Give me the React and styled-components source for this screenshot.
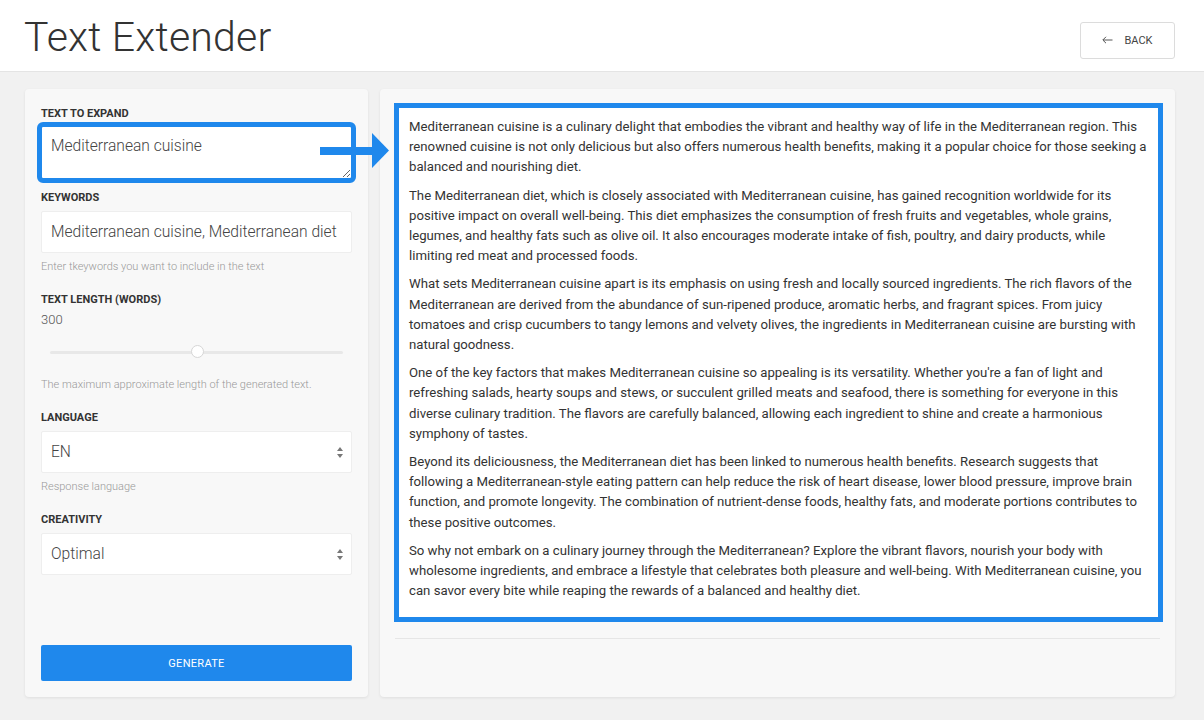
import React from 'react';
import styled, { createGlobalStyle } from 'styled-components';

const BLUE = '#1f88ec';

const GlobalStyle = createGlobalStyle`
  html, body {
    margin: 0;
    padding: 0;
    background: #f1f1f1;
    font-family: Roboto, "Liberation Sans", Arial, sans-serif;
    color: #333;
  }
  * { box-sizing: border-box; }
`;

const Page = styled.div`
  position: relative;
  min-height: 720px;
`;

const Header = styled.header`
  height: 72px;
  background: #fff;
  border-bottom: 1px solid #e4e4e4;
  display: flex;
  align-items: center;
  justify-content: space-between;
  padding: 0 29px 0 24px;
`;

const Title = styled.h1`
  margin: 0;
  font-size: 41px;
  font-weight: 300;
  color: #333;
  letter-spacing: 0.2px;
  line-height: 1;
  padding-top: 4px;
`;

const BackButton = styled.button`
  width: 95px;
  height: 37px;
  margin-top: 9px;
  display: flex;
  align-items: center;
  justify-content: center;
  gap: 11px;
  background: #fff;
  border: 1px solid #dcdcdc;
  border-radius: 3px;
  font-family: inherit;
  font-size: 11px;
  color: #444;
  padding: 0;
  cursor: pointer;
`;

const Main = styled.main`
  display: grid;
  grid-template-columns: 343px 795px;
  gap: 12px;
  padding: 17px 29px 0 25px;
`;

const Panel = styled.section`
  background: #f8f8f8;
  border-radius: 4px;
  box-shadow: 0 1px 3px rgba(0, 0, 0, 0.08);
  height: 608px;
  display: flex;
  flex-direction: column;
  padding: ${({ $pad }) => $pad};
`;

const Field = styled.div`
  display: flex;
  flex-direction: column;
  margin-bottom: 12px;
`;

const Label = styled.label`
  font-size: 11px;
  line-height: 14px;
  font-weight: 700;
  color: #333;
  text-transform: uppercase;
  margin-bottom: ${({ $mb }) => $mb || 6}px;
`;

const TextArea = styled.textarea`
  height: 53px;
  border: 1px solid #eee;
  border-radius: 2px;
  background: #fff;
  font-family: inherit;
  font-size: 15.6px;
  font-weight: 300;
  color: #444;
  padding: 10px 9px;
  resize: vertical;
  outline: 5px solid ${BLUE};
  outline-offset: -1px;
`;

const Input = styled.input`
  height: 42px;
  border: 1px solid #eee;
  border-radius: 2px;
  background: #fff;
  font-family: inherit;
  font-size: 15.6px;
  font-weight: 300;
  color: #444;
  padding: 0 9px;
  outline: none;
`;

const Help = styled.div`
  font-size: 11px;
  line-height: 14px;
  color: #999;
  font-weight: 300;
  margin: ${({ $mt }) => $mt || 7}px 0 7px;
`;

const Value = styled.div`
  font-size: 13px;
  line-height: 16px;
  color: #555;
  font-weight: 300;
  margin-top: -1px;
`;

const SliderRow = styled.div`
  position: relative;
  height: 24px;
  margin: 12px 9px 0;
  display: flex;
  align-items: center;
`;

const Track = styled.div`
  width: 100%;
  height: 3px;
  border-radius: 2px;
  background: #e8e8e8;
`;

const Knob = styled.div`
  position: absolute;
  top: 50%;
  width: 13px;
  height: 13px;
  margin: -7px 0 0 -6px;
  border-radius: 50%;
  background: #fff;
  border: 1px solid #d6d6d6;
`;

const SelectWrap = styled.div`
  position: relative;
  height: 42px;
  background: #fff;
  border: 1px solid #eee;
  border-radius: 2px;
  display: flex;
  align-items: center;
  padding: 0 9px;
  font-size: 15.6px;
  font-weight: 300;
  color: #444;
`;

const Arrows = styled.svg`
  position: absolute;
  right: 7px;
  top: 50%;
  margin-top: -5px;
`;

const Generate = styled.button`
  margin-top: auto;
  height: 36px;
  border: none;
  border-radius: 2px;
  background: ${BLUE};
  color: #fff;
  font-family: inherit;
  font-size: 11px;
  letter-spacing: 0.3px;
  cursor: pointer;
`;

const Output = styled.div`
  margin: 0 -3px 0 -1px;
  background: #fff;
  border: 5px solid ${BLUE};
  padding: 9px 10px 8px;
`;

const Para = styled.p`
  margin: 0 0 8px;
  font-size: 13.2px;
  line-height: 20.2px;
  color: #333;
  font-weight: 400;
`;

const Divider = styled.hr`
  border: none;
  border-top: 1px solid #e6e6e6;
  margin: 16px 0 0;
  width: 765px;
`;

const PointerArrow = styled.svg`
  position: absolute;
  left: 320px;
  top: 132px;
`;

const SelectBox = ({ value }) => (
  <SelectWrap>
    {value}
    <Arrows width="8" height="11" viewBox="0 0 8 11">
      <path d="M4 0 L7 4 H1 Z" fill="#777" />
      <path d="M4 11 L7 7 H1 Z" fill="#777" />
    </Arrows>
  </SelectWrap>
);

const paragraphs = [
  "Mediterranean cuisine is a culinary delight that embodies the vibrant and healthy way of life in the Mediterranean region. This renowned cuisine is not only delicious but also offers numerous health benefits, making it a popular choice for those seeking a balanced and nourishing diet.",
  "The Mediterranean diet, which is closely associated with Mediterranean cuisine, has gained recognition worldwide for its positive impact on overall well-being. This diet emphasizes the consumption of fresh fruits and vegetables, whole grains, legumes, and healthy fats such as olive oil. It also encourages moderate intake of fish, poultry, and dairy products, while limiting red meat and processed foods.",
  "What sets Mediterranean cuisine apart is its emphasis on using fresh and locally sourced ingredients. The rich flavors of the Mediterranean are derived from the abundance of sun-ripened produce, aromatic herbs, and fragrant spices. From juicy tomatoes and crisp cucumbers to tangy lemons and velvety olives, the ingredients in Mediterranean cuisine are bursting with natural goodness.",
  "One of the key factors that makes Mediterranean cuisine so appealing is its versatility. Whether you're a fan of light and refreshing salads, hearty soups and stews, or succulent grilled meats and seafood, there is something for everyone in this diverse culinary tradition. The flavors are carefully balanced, allowing each ingredient to shine and create a harmonious symphony of tastes.",
  "Beyond its deliciousness, the Mediterranean diet has been linked to numerous health benefits. Research suggests that following a Mediterranean-style eating pattern can help reduce the risk of heart disease, lower blood pressure, improve brain function, and promote longevity. The combination of nutrient-dense foods, healthy fats, and moderate portions contributes to these positive outcomes.",
  "So why not embark on a culinary journey through the Mediterranean? Explore the vibrant flavors, nourish your body with wholesome ingredients, and embrace a lifestyle that celebrates both pleasure and well-being. With Mediterranean cuisine, you can savor every bite while reaping the rewards of a balanced and healthy diet.",
];

export default function App() {
  return (
    <Page>
      <GlobalStyle />
      <Header>
        <Title>Text Extender</Title>
        <BackButton>
          <svg width="11" height="8" viewBox="0 0 11 8">
            <path d="M10.5 4 H1 M4 0.8 L0.8 4 L4 7.2" fill="none" stroke="#555" strokeWidth="1" />
          </svg>
          BACK
        </BackButton>
      </Header>
      <Main>
        <Panel $pad="18px 16px 16px">
          <Field>
            <Label $mb={5}>Text to expand</Label>
            <TextArea defaultValue="Mediterranean cuisine" />
          </Field>
          <Field>
            <Label>Keywords</Label>
            <Input defaultValue="Mediterranean cuisine, Mediterranean diet" />
            <Help>Enter tkeywords you want to include in the text</Help>
          </Field>
          <Field>
            <Label>Text length (words)</Label>
            <Value>300</Value>
            <SliderRow>
              <Track />
              <Knob style={{ left: `${(300 / 600) * 100}%` }} />
            </SliderRow>
            <Help $mt={14}>The maximum approximate length of the generated text.</Help>
          </Field>
          <Field>
            <Label>Language</Label>
            <SelectBox value="EN" />
            <Help>Response language</Help>
          </Field>
          <Field>
            <Label>Creativity</Label>
            <SelectBox value="Optimal" />
          </Field>
          <Generate>GENERATE</Generate>
        </Panel>
        <Panel $pad="14px 15px">
          <Output>
            {paragraphs.map((p, i) => (
              <Para key={i}>{p}</Para>
            ))}
          </Output>
          <Divider />
        </Panel>
      </Main>
      <PointerArrow width="70" height="38" viewBox="0 0 70 38">
        <rect x="0" y="15" width="54" height="8" fill={BLUE} />
        <path d="M52 1 L69 18.5 L52 36 Z" fill={BLUE} />
      </PointerArrow>
    </Page>
  );
}
